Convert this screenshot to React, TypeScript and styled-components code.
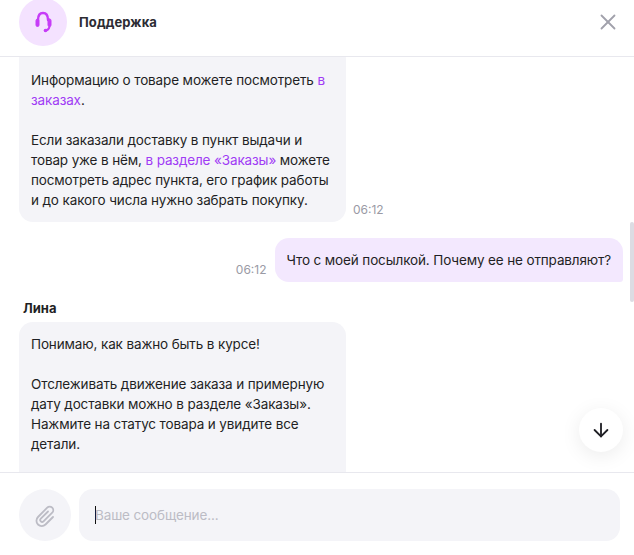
import styled, { createGlobalStyle } from 'styled-components'
import { ArrowDown, X } from 'lucide-react'

const GlobalStyle = createGlobalStyle`
  html, body {
    margin: 0;
    padding: 0;
    background: #fff;
  }
  * {
    box-sizing: border-box;
  }
`
const Page = styled.div`
  position: relative;
  display: flex;
  flex-direction: column;
  width: 634px;
  height: 555px;
  overflow: hidden;
  font-family: Inter, "Liberation Sans", sans-serif;
  font-size: 13.5px;
  letter-spacing: -0.13px;
  line-height: 20px;
  color: #1f1f24;
`
const Header = styled.header`
  flex: none;
  display: flex;
  align-items: center;
  gap: 12px;
  height: 57px;
  padding: 0 13px 13px 19px;
  border-bottom: 1px solid #e8e8ee;
`
const Avatar = styled.div`
  flex: none;
  display: flex;
  align-items: center;
  justify-content: center;
  width: 48px;
  height: 48px;
  border-radius: 50%;
  background: #f4e2ff;
`
const HeaderTitle = styled.h1`
  flex: 1;
  margin: 0;
  font-size: 13px;
  font-weight: 700;
  letter-spacing: 0.1px;
  color: #2c2c33;
`
const CloseButton = styled.button`
  display: flex;
  padding: 0;
  border: 0;
  background: none;
  color: #a1a1ab;
`
const Feed = styled.div`
  flex: 1;
  min-height: 0;
  overflow: hidden;
  display: flex;
  flex-direction: column;
  padding: 0 11px 0 19px;
`
const Row = styled.div<{ $mine?: boolean; $gap?: number }>`
  flex: none;
  display: flex;
  justify-content: ${p => (p.$mine ? 'flex-end' : 'flex-start')};
  align-items: flex-end;
  gap: ${p => (p.$mine ? 8 : 7)}px;
  margin-top: ${p => p.$gap ?? 0}px;
`
const Bubble = styled.div<{ $mine?: boolean }>`
  padding: 12px;
  border-radius: ${p => (p.$mine ? '14px 14px 3px 14px' : '14px')};
  background: ${p => (p.$mine ? '#f3e8fe' : '#f4f4f8')};
  width: ${p => (p.$mine ? 'auto' : '327px')};
`
// the top of this bubble is scrolled away under the header
const FirstBubble = styled(Bubble)`
  margin-top: -12px;
  padding-top: 25px;
`
const OpenBubble = styled(Bubble)`
  padding-bottom: 40px;
`
const Time = styled.span`
  font-size: 12px;
  letter-spacing: 0;
  line-height: 16px;
  color: #9a9aa5;
  padding-bottom: 4px;
`
const Sender = styled.div`
  flex: none;
  margin: 16px 0 4px 4px;
  font-size: 13px;
  font-weight: 700;
  letter-spacing: 0;
  line-height: 20px;
`
const Paragraph = styled.p`
  margin: 0 0 20px;

  &:last-child {
    margin-bottom: 0;
  }
`
const Link = styled.a`
  color: #a03bf5;
`
const Footer = styled.footer`
  flex: none;
  display: flex;
  gap: 8px;
  height: 83px;
  padding: 16px 14px 14px 19px;
  border-top: 1px solid #e8e8ee;
`
const AttachButton = styled.button`
  flex: none;
  display: flex;
  align-items: center;
  justify-content: center;
  width: 52px;
  height: 52px;
  padding: 0;
  border: 0;
  border-radius: 50%;
  background: #f4f4f8;
`
const Composer = styled.div`
  flex: 1;
  display: flex;
  align-items: center;
  height: 52px;
  padding: 0 16px;
  border-radius: 14px;
  background: #f4f4f8;
`
const Caret = styled.span`
  width: 1px;
  height: 18px;
  margin-right: -1px;
  background: #111;
`
const Placeholder = styled.span`
  color: #bcbcc5;
`
const ScrollThumb = styled.div`
  position: absolute;
  top: 222px;
  right: 0;
  width: 4px;
  height: 80px;
  border-radius: 2px;
  background: #dcdce3;
`
const ScrollDown = styled.button`
  position: absolute;
  top: 408px;
  left: 579px;
  display: flex;
  align-items: center;
  justify-content: center;
  width: 44px;
  height: 44px;
  padding: 0;
  border: 0;
  border-radius: 50%;
  background: #fff;
  box-shadow: 0 4px 20px rgba(0, 0, 0, 0.08);
  color: #1f1f24;
`

function HeadsetIcon() {
  return (
    <svg width="28" height="28" viewBox="0 0 28 28" fill="none" stroke="#c63cf7" strokeLinecap="round">
      <path d="M9 12C9 7.5 11 5 14 5s5 2.500 5 7" strokeWidth="2.4" />
      <path d="M20.500 18.500c-.4 2.500-2 3.800-4.500 4" strokeWidth="2" />
      <rect x="7" y="11" width="3" height="7.500" rx="1.500" fill="#c63cf7" strokeWidth="1" />
      <rect x="19" y="11" width="3" height="7.500" rx="1.500" fill="#c63cf7" strokeWidth="1" />
      <circle cx="16.500" cy="22.500" r="1.800" fill="#c63cf7" stroke="none" />
    </svg>
  )
}

function ClipIcon() {
  return (
    <svg width="24" height="24" viewBox="0 0 24 24" fill="none" stroke="#bcbcc5" strokeWidth="1.800" strokeLinecap="round" strokeLinejoin="round">
      <path d="M15 8.500 7.800 15.700a1.900 1.900 0 0 0 2.700 2.700L19.200 9.700a3.500 3.500 0 0 0-5-5L5 14a5.300 5.300 0 0 0 7.500 7.500L20 14" />
    </svg>
  )
}

export default function App() {
  return (
    <Page>
      <GlobalStyle />
      <Header>
        <Avatar>
          <HeadsetIcon />
        </Avatar>
        <HeaderTitle>Поддержка</HeaderTitle>
        <CloseButton aria-label="Закрыть">
          <X size={26} strokeWidth={1.7} />
        </CloseButton>
      </Header>
      <Feed>
        <Row>
          <FirstBubble>
            <Paragraph>
              Информацию о товаре можете посмотреть <Link>в заказах</Link>.
            </Paragraph>
            <Paragraph>
              Если заказали доставку в пункт выдачи и товар уже в нём, <Link>в разделе «Заказы»</Link> можете
              посмотреть адрес пункта, его график работы и до какого числа нужно забрать покупку.
            </Paragraph>
          </FirstBubble>
          <Time>06:12</Time>
        </Row>
        <Row $mine $gap={16}>
          <Time>06:12</Time>
          <Bubble $mine>Что с моей посылкой. Почему ее не отправляют?</Bubble>
        </Row>
        <Sender>Лина</Sender>
        <Row>
          <OpenBubble>
            <Paragraph>Понимаю, как важно быть в курсе!</Paragraph>
            <Paragraph>
              Отслеживать движение заказа и примерную дату доставки можно в разделе «Заказы». Нажмите на статус
              товара и увидите все детали.
            </Paragraph>
          </OpenBubble>
        </Row>
      </Feed>
      <Footer>
        <AttachButton aria-label="Прикрепить файл">
          <ClipIcon />
        </AttachButton>
        <Composer>
          <Caret />
          <Placeholder>Ваше сообщение...</Placeholder>
        </Composer>
      </Footer>
      <ScrollThumb />
      <ScrollDown aria-label="Вниз">
        <ArrowDown size={22} strokeWidth={2} />
      </ScrollDown>
    </Page>
  )
}
